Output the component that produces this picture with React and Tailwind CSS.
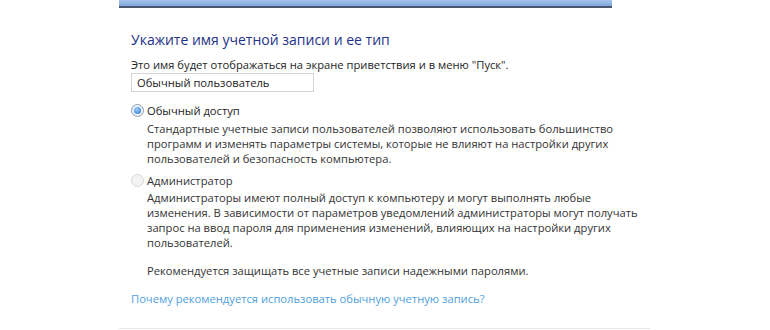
function Radio({ checked }) {
  return (
    <span
      className={
        "mt-[1px] flex h-[13px] w-[13px] shrink-0 items-center justify-center rounded-full border " +
        (checked ? "border-[#8d9db3] bg-[#eef3fa]" : "border-[#d8d8d8] bg-[#f3f3f3]")
      }
    >
      {checked && <span className="h-[7px] w-[7px] rounded-full bg-[radial-gradient(circle_at_40%_35%,#9fd0ff,#1f6fc4)]" />}
    </span>
  );
}

function Option({ checked, label, className = "", children }) {
  return (
    <div className={"flex flex-col " + className}>
      <label className="flex items-start gap-[3px] text-[#1e1e1e]">
        <Radio checked={checked} />
        <span className={checked ? "" : "text-[#333]"}>{label}</span>
      </label>
      <div className="mt-[2.5px] whitespace-nowrap pl-[16px] text-[#333]">{children}</div>
    </div>
  );
}

export default function App() {
  return (
    <div className="h-[330px] w-[770px] overflow-hidden bg-white font-['Open_Sans',sans-serif] text-[11.2px] leading-[15px] text-[#1e1e1e]">
      <div className="ml-[119px] flex w-[531px] flex-col">
        <div className="h-[8px] w-[493px] border-b-2 border-[#4a5a6e] bg-gradient-to-b from-[#a6c4ec] to-[#7ea6de]" />
        <div className="flex flex-col pl-[12px]">
          <h1 className="mt-[22px] text-[14px] leading-[20px] text-[#1e3287]">
            Укажите имя учетной записи и ее тип
          </h1>
          <p className="mt-[7px] whitespace-nowrap">Это имя будет отображаться на экране приветствия и в меню "Пуск".</p>
          <div className="mt-[1px] flex h-[19px] w-[183px] items-center border border-[#d4d4d4] bg-white px-[5px] text-[#222]">
            Обычный пользователь
          </div>
          <Option checked label="Обычный доступ" className="mt-[11px]">
            Стандартные учетные записи пользователей позволяют использовать большинство
            <br />
            программ и изменять параметры системы, которые не влияют на настройки других
            <br />
            пользователей и безопасность компьютера.
          </Option>
          <Option label="Администратор" className="mt-[7px]">
            Администраторы имеют полный доступ к компьютеру и могут выполнять любые
            <br />
            изменения. В зависимости от параметров уведомлений администраторы могут получать
            <br />
            запрос на ввод пароля для применения изменений, влияющих на настройки других
            <br />
            пользователей.
            <p className="mt-[13px]">Рекомендуется защищать все учетные записи надежными паролями.</p>
          </Option>
          <a className="mt-[13px] whitespace-nowrap text-[#4fa0dc]">Почему рекомендуется использовать обычную учетную запись?</a>
        </div>
        <div className="mt-[22px] h-px w-[531px] bg-[#e6e6e6]" />
      </div>
    </div>
  );
}
